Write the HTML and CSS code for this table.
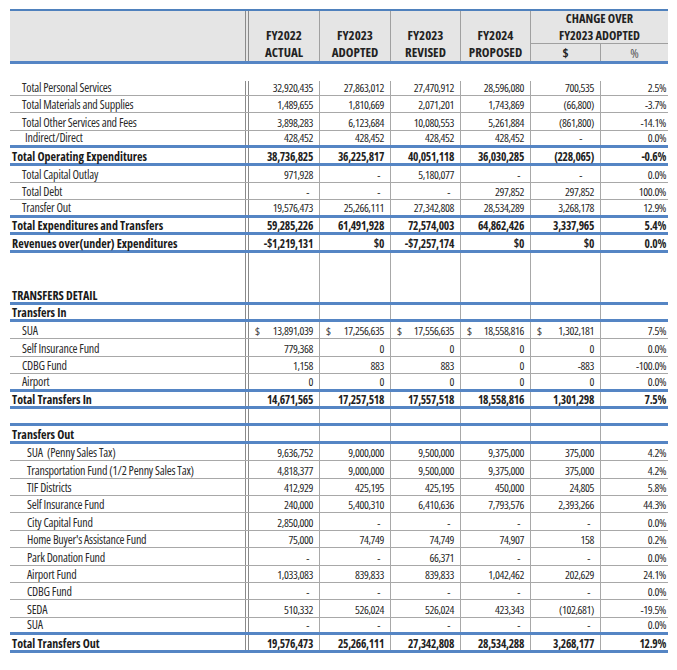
FILE: index.html
```html
<!DOCTYPE html>
<html>
<head>
<meta charset="utf-8">
<link rel="stylesheet" href="styles.css">
</head>
<body>
<div class="sheet">
  <div class="head">
    <div class="h-label"></div>
    <div class="h-col"><span>FY2022</span><span>ACTUAL</span></div>
    <div class="h-col"><span>FY2023</span><span>ADOPTED</span></div>
    <div class="h-col"><span>FY2023</span><span>REVISED</span></div>
    <div class="h-col"><span>FY2024</span><span>PROPOSED</span></div>
    <div class="h-change">CHANGE OVER<br>FY2023 ADOPTED</div>
    <div class="h-sub h-dol">$</div>
    <div class="h-sub h-pct">%</div>
  </div>

  <div class="body">
    <div class="row first"><div class="lbl">Total Personal Services</div><div>32,920,435</div><div>27,863,012</div><div>27,470,912</div><div>28,596,080</div><div>700,535</div><div>2.5%</div></div>
    <div class="row"><div class="lbl">Total Materials and Supplies</div><div>1,489,655</div><div>1,810,669</div><div>2,071,201</div><div>1,743,869</div><div>(66,800)</div><div>-3.7%</div></div>
    <div class="row"><div class="lbl">Total Other Services and Fees</div><div>3,898,283</div><div>6,123,684</div><div>10,080,553</div><div>5,261,884</div><div>(861,800)</div><div>-14.1%</div></div>
    <div class="row blue"><div class="lbl ind">Indirect/Direct</div><div>428,452</div><div>428,452</div><div>428,452</div><div>428,452</div><div class="dash dmid">-</div><div>0.0%</div></div>
    <div class="row tot blue"><div class="lbl">Total Operating Expenditures</div><div>38,736,825</div><div>36,225,817</div><div>40,051,118</div><div>36,030,285</div><div>(228,065)</div><div>-0.6%</div></div>
    <div class="row"><div class="lbl">Total Capital Outlay</div><div>971,928</div><div class="dash">-</div><div>5,180,077</div><div class="dash">-</div><div class="dash dmid">-</div><div>0.0%</div></div>
    <div class="row"><div class="lbl">Total Debt</div><div class="dash">-</div><div class="dash">-</div><div class="dash">-</div><div>297,852</div><div>297,852</div><div>100.0%</div></div>
    <div class="row blue"><div class="lbl">Transfer Out</div><div>19,576,473</div><div>25,266,111</div><div>27,342,808</div><div>28,534,289</div><div>3,268,178</div><div>12.9%</div></div>
    <div class="row tot blue"><div class="lbl">Total Expenditures and Transfers</div><div>59,285,226</div><div>61,491,928</div><div>72,574,003</div><div>64,862,426</div><div>3,337,965</div><div>5.4%</div></div>
    <div class="row tot blue"><div class="lbl">Revenues over(under) Expenditures</div><div>-$1,219,131</div><div>$0</div><div>-$7,257,174</div><div>$0</div><div>$0</div><div>0.0%</div></div>
    <div class="row blank"><div class="lbl"></div><div></div><div></div><div></div><div></div><div></div><div></div></div>
    <div class="row blank"><div class="lbl"></div><div></div><div></div><div></div><div></div><div></div><div></div></div>
    <div class="row tot blue"><div class="lbl">TRANSFERS DETAIL</div><div></div><div></div><div></div><div></div><div></div><div></div></div>
    <div class="row tot blue"><div class="lbl">Transfers In</div><div></div><div></div><div></div><div></div><div></div><div></div></div>
    <div class="row"><div class="lbl">SUA</div><div class="acc"><span>$</span><span>13,891,039</span></div><div class="acc"><span>$</span><span>17,256,635</span></div><div class="acc"><span>$</span><span>17,556,635</span></div><div class="acc"><span>$</span><span>18,558,816</span></div><div class="acc"><span>$</span><span>1,302,181</span></div><div>7.5%</div></div>
    <div class="row"><div class="lbl">Self Insurance Fund</div><div>779,368</div><div>0</div><div>0</div><div>0</div><div>0</div><div>0.0%</div></div>
    <div class="row"><div class="lbl">CDBG Fund</div><div>1,158</div><div>883</div><div>883</div><div>0</div><div>-883</div><div>-100.0%</div></div>
    <div class="row blue"><div class="lbl">Airport</div><div>0</div><div>0</div><div>0</div><div>0</div><div>0</div><div>0.0%</div></div>
    <div class="row tot blue"><div class="lbl">Total Transfers In</div><div>14,671,565</div><div>17,257,518</div><div>17,557,518</div><div>18,558,816</div><div>1,301,298</div><div>7.5%</div></div>
    <div class="row blue"><div class="lbl"></div><div></div><div></div><div></div><div></div><div></div><div></div></div>
    <div class="row tot blue"><div class="lbl">Transfers Out</div><div></div><div></div><div></div><div></div><div></div><div></div></div>
    <div class="row out"><div class="lbl">SUA&nbsp; (Penny Sales Tax)</div><div>9,636,752</div><div>9,000,000</div><div>9,500,000</div><div>9,375,000</div><div>375,000</div><div>4.2%</div></div>
    <div class="row out"><div class="lbl">Transportation Fund (1/2 Penny Sales Tax)</div><div>4,818,377</div><div>9,000,000</div><div>9,500,000</div><div>9,375,000</div><div>375,000</div><div>4.2%</div></div>
    <div class="row out"><div class="lbl">TIF Districts</div><div>412,929</div><div>425,195</div><div>425,195</div><div>450,000</div><div>24,805</div><div>5.8%</div></div>
    <div class="row out"><div class="lbl">Self Insurance Fund</div><div>240,000</div><div>5,400,310</div><div>6,410,636</div><div>7,793,576</div><div>2,393,266</div><div>44.3%</div></div>
    <div class="row out"><div class="lbl">City Capital Fund</div><div>2,850,000</div><div class="dash">-</div><div class="dash">-</div><div class="dash">-</div><div class="dash">-</div><div>0.0%</div></div>
    <div class="row out"><div class="lbl">Home Buyer's Assistance Fund</div><div>75,000</div><div>74,749</div><div>74,749</div><div>74,907</div><div>158</div><div>0.2%</div></div>
    <div class="row out"><div class="lbl">Park Donation Fund</div><div class="dash">-</div><div class="dash">-</div><div>66,371</div><div class="dash">-</div><div class="dash">-</div><div>0.0%</div></div>
    <div class="row out"><div class="lbl">Airport Fund</div><div>1,033,083</div><div>839,833</div><div>839,833</div><div>1,042,462</div><div>202,629</div><div>24.1%</div></div>
    <div class="row out"><div class="lbl">CDBG Fund</div><div class="dash">-</div><div class="dash">-</div><div class="dash">-</div><div class="dash">-</div><div class="dash">-</div><div>0.0%</div></div>
    <div class="row out"><div class="lbl">SEDA</div><div>510,332</div><div>526,024</div><div>526,024</div><div>423,343</div><div>(102,681)</div><div>-19.5%</div></div>
    <div class="row out blue"><div class="lbl">SUA</div><div class="dash">-</div><div class="dash">-</div><div class="dash">-</div><div class="dash">-</div><div class="dash">-</div><div>0.0%</div></div>
    <div class="row tot blue"><div class="lbl">Total Transfers Out</div><div>19,576,473</div><div>25,266,111</div><div>27,342,808</div><div>28,534,288</div><div>3,268,177</div><div>12.9%</div></div>
  </div>
</div>
</body>
</html>
```
FILE: styles.css
```css
html, body {
  margin: 0;
  padding: 0;
  background: #ffffff;
}
body {
  font-family: "Open Sans", "DejaVu Sans Condensed", sans-serif;
  font-stretch: 75%;
  color: #1f1f1f;
}
.sheet {
  width: 658px;
  margin-left: 10px;
  padding-top: 9px;
}
.head {
  display: grid;
  grid-template-columns: 239px 71px 71px 70px 70px 70px 67px;
  grid-template-rows: 16px 17px 17px;
  border-top: 2px solid #4f81bd;
  border-bottom: 3px solid #5585c4;
  background: #e5e5e5;
  font-weight: bold;
  font-size: 13px;
  color: #222;
}
.h-label {
  grid-column: 1;
  grid-row: 1 / 4;
  border-right: 4px double #8a8a8a;
}
.h-col {
  grid-row: 1 / 4;
  border-right: 1px solid #a0a0a0;
  display: flex;
  flex-direction: column;
  justify-content: flex-end;
  align-items: center;
  line-height: 17px;
}
.h-change {
  grid-column: 6 / 8;
  grid-row: 1 / 3;
  border-bottom: 1px solid #a0a0a0;
  text-align: center;
  font-size: 12.4px;
  line-height: 16.5px;
  padding-top: 0;
}
.h-sub {
  grid-row: 3;
  display: flex;
  align-items: center;
  justify-content: center;
  font-weight: normal;
}
.h-dol {
  grid-column: 6;
  border-right: 1px solid #a0a0a0;
  font-weight: bold;
}
.h-pct {
  grid-column: 7;
  color: #555;
}
.body {
  margin-top: 17px;
}
.row {
  display: grid;
  grid-template-columns: 239px 71px 71px 70px 70px 70px 67px;
  height: 17.4px;
  box-sizing: border-box;
  border-bottom: 1px solid #a8a8a8;
  font-size: 11.5px;
  letter-spacing: -0.4px;
}
.row.first {
  height: 15px;
}
.row > div {
  border-right: 1px solid #a8a8a8;
  display: flex;
  align-items: flex-end;
  justify-content: flex-end;
  padding: 0 6px 1px 0;
  line-height: 12px;
  white-space: nowrap;
}
.row > .lbl {
  border-right: 4px double #8a8a8a;
  justify-content: flex-start;
  padding-left: 12px;
  font-size: 12px;
  letter-spacing: -0.2px;
  color: #2a2a2a;
}
.row > .lbl.ind {
  padding-left: 15px;
}
.row.out > .lbl {
  padding-left: 17px;
}
.row > div:last-child {
  border-right: none;
  padding-right: 2px;
}
.row > .dash {
  padding-right: 10px;
}
.row > .dash.dmid {
  padding-right: 18px;
}
.row > .acc {
  justify-content: space-between;
  padding-left: 6px;
}
.row.blue {
  border-bottom: 3px solid #5585c4;
}
.row.blank {
  border-bottom: none;
}
.row.tot {
  font-weight: bold;
  font-size: 11.5px;
  letter-spacing: -0.3px;
}
.row.tot > div {
  padding-bottom: 0;
}
.row.tot > .lbl {
  padding-left: 2px;
  font-size: 12px;
  letter-spacing: 0;
  color: #1a1a1a;
}
```
